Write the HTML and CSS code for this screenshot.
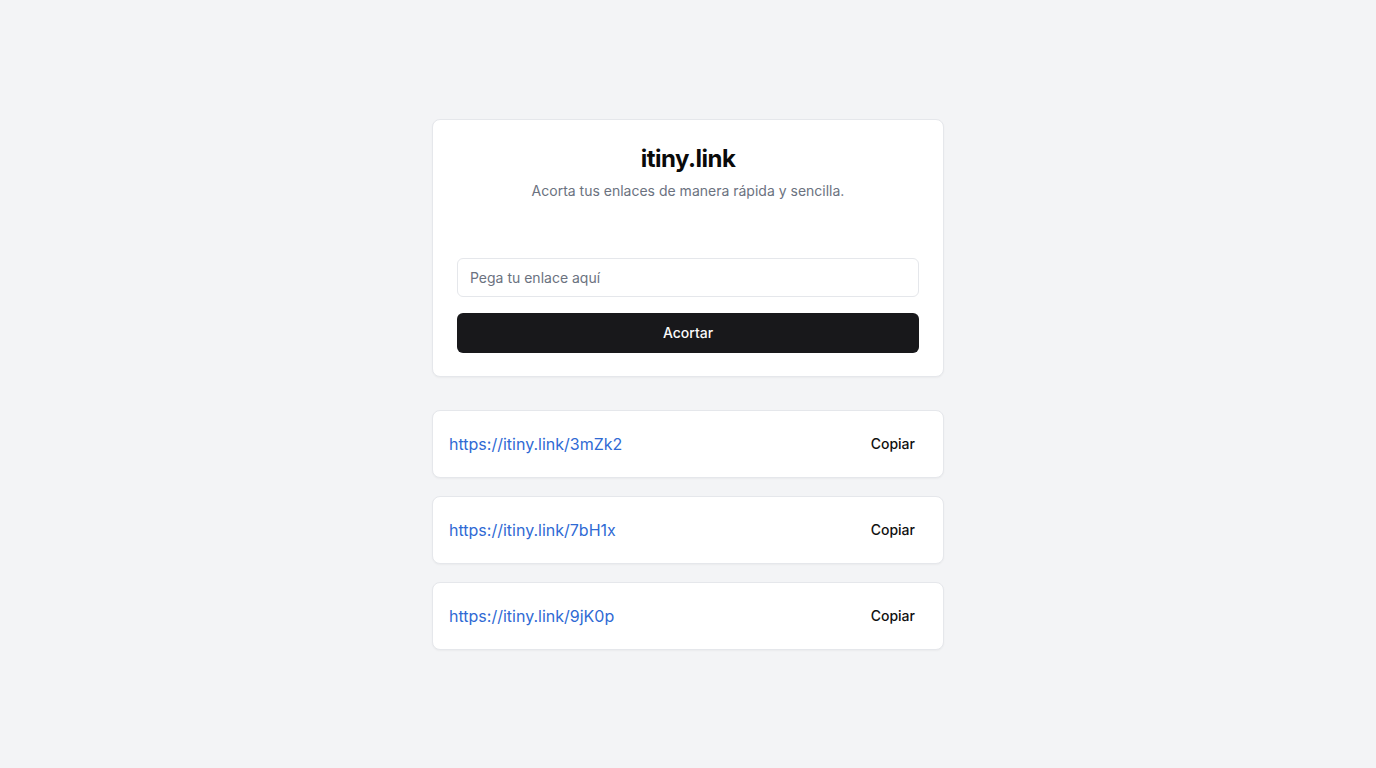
FILE: index.html
```html
<!DOCTYPE html>
<html lang="es">
<head>
<meta charset="utf-8">
<title>itiny.link</title>
<link rel="stylesheet" href="styles.css">
</head>
<body>
<main class="wrap">
  <section class="card main">
    <header class="head">
      <h1 class="title">itiny.link</h1>
      <p class="subtitle">Acorta tus enlaces de manera rápida y sencilla.</p>
    </header>
    <form class="form">
      <input class="input" type="text" placeholder="Pega tu enlace aquí">
      <button class="btn" type="button">Acortar</button>
    </form>
  </section>
  <ul class="list">
    <li class="card item"><a class="link" href="#">https://itiny.link/3mZk2</a><button class="copy" type="button">Copiar</button></li>
    <li class="card item"><a class="link" href="#">https://itiny.link/7bH1x</a><button class="copy" type="button">Copiar</button></li>
    <li class="card item"><a class="link" href="#">https://itiny.link/9jK0p</a><button class="copy" type="button">Copiar</button></li>
  </ul>
</main>
</body>
</html>
```
FILE: styles.css
```css
* { box-sizing: border-box; }
html, body { margin: 0; padding: 0; }
body {
  background: #f3f4f6;
  font-family: Inter, "Liberation Sans", sans-serif;
  color: #111;
  min-height: 100vh;
  display: flex;
  align-items: center;
  justify-content: center;
}
.wrap {
  width: 512px;
  display: flex;
  flex-direction: column;
  gap: 33px;
}
.card {
  background: #fff;
  border: 1px solid #e5e7eb;
  border-radius: 8px;
  box-shadow: 0 1px 2px rgba(0,0,0,0.04);
}
.main {
  padding: 23px 24px 23px;
}
.head {
  text-align: center;
  margin-bottom: 57px;
}
.title {
  margin: 0;
  font-size: 24px;
  line-height: 32px;
  font-weight: 700;
  letter-spacing: -0.5px;
  color: #0a0a0a;
}
.subtitle {
  margin: 6px 0 0;
  font-size: 14px;
  line-height: 20px;
  color: #6b7280;
}
.form {
  display: flex;
  flex-direction: column;
  gap: 16px;
}
.input {
  height: 39px;
  border: 1px solid #e5e7eb;
  border-radius: 6px;
  padding: 0 12px;
  font: inherit;
  font-size: 14px;
  color: #111;
  outline: none;
}
.input::placeholder { color: #6b7280; }
.btn {
  height: 40px;
  border: 0;
  border-radius: 6px;
  background: #18181b;
  color: #fafafa;
  font: inherit;
  font-size: 14px;
  font-weight: 500;
}
.list {
  list-style: none;
  margin: 0;
  padding: 0;
  display: flex;
  flex-direction: column;
  gap: 18px;
}
.item {
  height: 68px;
  display: flex;
  align-items: center;
  justify-content: space-between;
  padding: 0 16px;
}
.link {
  color: #2f6ad4;
  text-decoration: none;
  font-size: 16px;
}
.copy {
  border: 0;
  background: transparent;
  font: inherit;
  font-size: 14px;
  font-weight: 500;
  color: #111;
  padding: 8px 12px;
  border-radius: 6px;
}
```
